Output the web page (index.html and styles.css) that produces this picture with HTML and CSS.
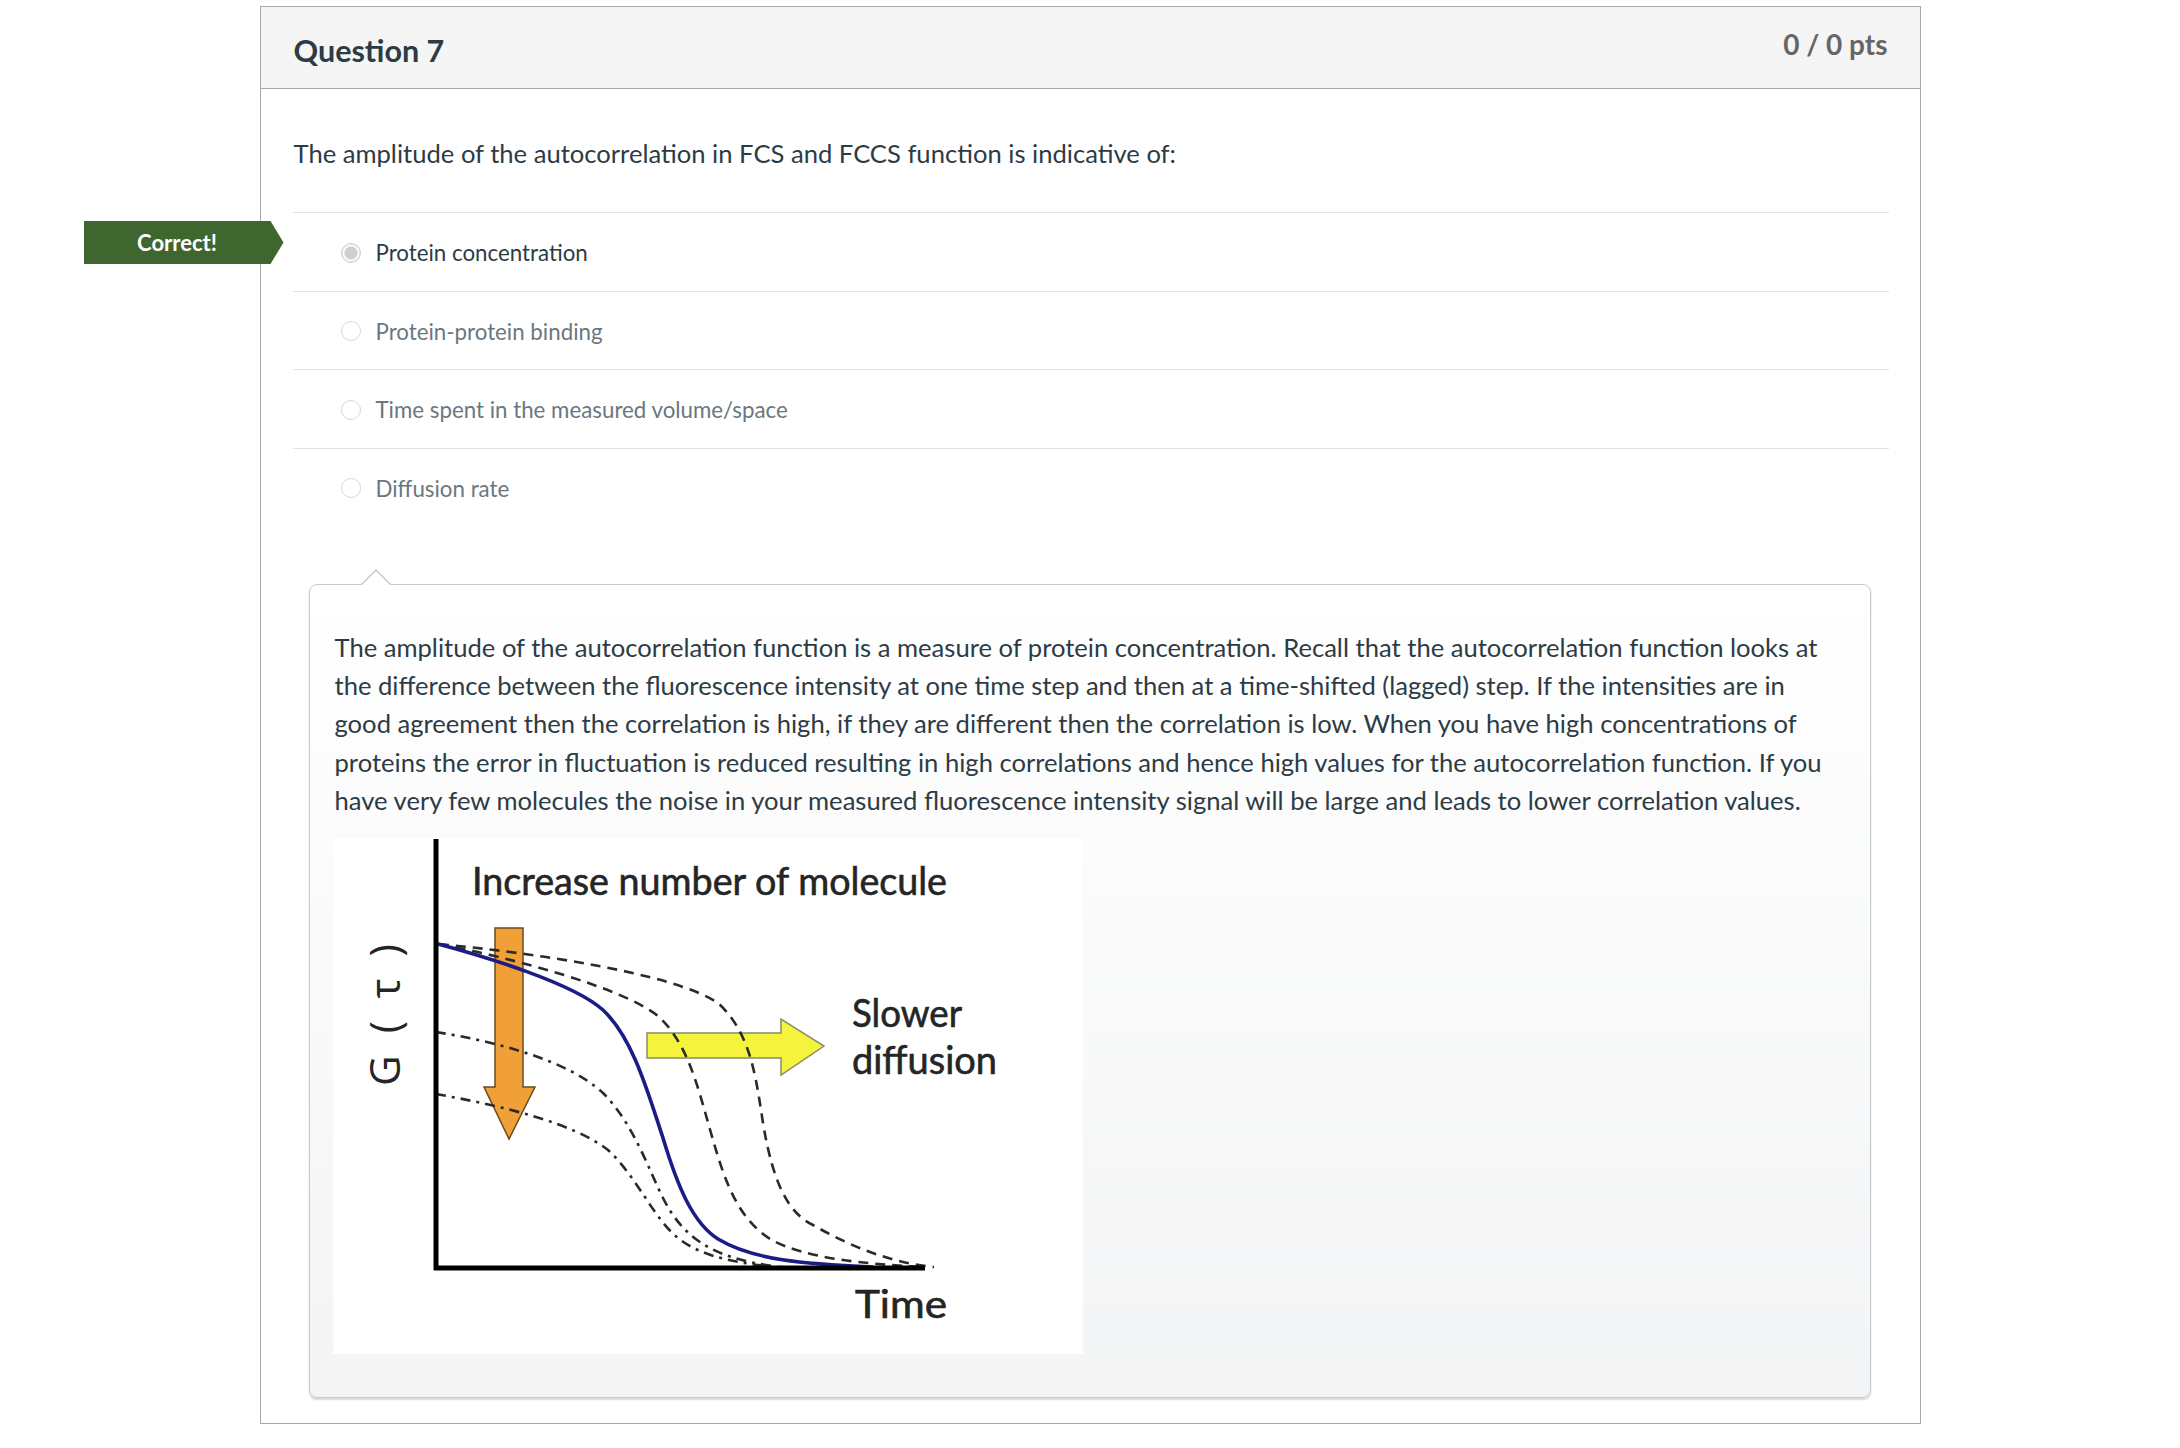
FILE: index.html
```html
<!DOCTYPE html>
<html lang="en">
<head>
<meta charset="utf-8">
<title>Question 7</title>
<link rel="stylesheet" href="styles.css">
</head>
<body>
<div class="card">
  <div class="badge">Correct!</div>
  <header class="q-head">
    <h2 class="q-title">Question 7</h2>
    <span class="pts">0 / 0 pts</span>
  </header>
  <div class="q-body">
    <p class="q-text">The amplitude of the autocorrelation in FCS and FCCS function is indicative of:</p>
    <ul class="answers">
      <li class="answer selected"><span class="radio"></span><span class="label">Protein concentration</span></li>
      <li class="answer"><span class="radio"></span><span class="label">Protein-protein binding</span></li>
      <li class="answer"><span class="radio"></span><span class="label">Time spent in the measured volume/space</span></li>
      <li class="answer"><span class="radio"></span><span class="label">Diffusion rate</span></li>
    </ul>
    <div class="feedback">
      <p class="fb-text">The amplitude of the autocorrelation function is a measure of protein concentration. Recall that the autocorrelation function looks at the difference between the fluorescence intensity at one time step and then at a time-shifted (lagged) step. If the intensities are in good agreement then the correlation is high, if they are different then the correlation is low. When you have high concentrations of proteins the error in fluctuation is reduced resulting in high correlations and hence high values for the autocorrelation function. If you have very few molecules the noise in your measured fluorescence intensity signal will be large and leads to lower correlation values.</p>
      <div class="figure">
        <svg width="750" height="516" viewBox="0 0 750 516" xmlns="http://www.w3.org/2000/svg">
          <rect width="750" height="516" fill="#ffffff"/>
          <!-- arrows -->
          <polygon points="162,90 190,90 190,249 202,249 176,301 151,249 162,249" fill="#f0a036" stroke="#6b4a1c" stroke-width="1.5"/>
          <polygon points="314,195 448,195 448,181 491,208 448,237 448,220 314,220" fill="#f4f43c" stroke="#8a8a6a" stroke-width="1.5"/>
          <!-- curves -->
          <g fill="none" stroke="#2a2a2a" stroke-width="2.6">
            <path d="M106,106 C180,120 290,150 325,178 C355,205 365,250 378,295 C392,345 405,380 437,401 C470,420 530,426 590,429" stroke-dasharray="10 7"/>
            <path d="M106,106 C200,115 340,135 385,165 C418,195 423,240 430,285 C440,345 455,375 480,387 C520,410 560,425 601,429" stroke-dasharray="10 7"/>
            <path d="M103,194 C160,203 235,222 270,255 C300,285 315,330 330,360 C350,400 380,420 440,428" stroke-dasharray="10 6 3 6"/>
            <path d="M103,256 C170,268 240,285 275,312 C305,340 320,380 345,400 C370,420 410,427 460,430" stroke-dasharray="10 6 3 6"/>
          </g>
          <path d="M105,106 C150,118 240,145 270,172 C300,200 315,255 330,300 C345,350 360,385 385,401 C420,422 470,426 540,429" fill="none" stroke="#1c1c86" stroke-width="3.6"/>
          <!-- axes -->
          <line x1="103" y1="1" x2="103" y2="432" stroke="#000" stroke-width="5"/>
          <line x1="101" y1="430" x2="592" y2="430" stroke="#000" stroke-width="5"/>
          <!-- labels -->
          <text class="fig-label" x="139" y="57" textLength="475" lengthAdjust="spacingAndGlyphs">Increase number of molecule</text>
          <text class="fig-label" x="519" y="189" textLength="110" lengthAdjust="spacingAndGlyphs">Slower</text>
          <text class="fig-label" x="519" y="236" textLength="145" lengthAdjust="spacingAndGlyphs">diffusion</text>
          <text class="fig-label" x="522" y="480" textLength="92" lengthAdjust="spacingAndGlyphs">Time</text>
          <text class="fig-axis" x="50" y="177" transform="rotate(-90 50 177)" textLength="142" lengthAdjust="spacing">G ( τ )</text>
        </svg>
      </div>
    </div>
  </div>
</div>
</body>
</html>
```

FILE: styles.css
```css
html, body {
  margin: 0;
  padding: 0;
  background: #ffffff;
}

body {
  font-family: Lato, "Open Sans", sans-serif;
  color: #2d3b45;
}

.card {
  position: relative;
  box-sizing: border-box;
  width: 1661px;
  margin: 6px auto 0;
  border: 1px solid #a9a9a9;
  background: #ffffff;
}

.badge {
  position: absolute;
  left: -177px;
  top: 214px;
  width: 200px;
  height: 43px;
  box-sizing: border-box;
  padding-right: 13px;
  background: #3f662f;
  color: #ffffff;
  font-weight: 700;
  font-size: 22px;
  line-height: 43px;
  text-align: center;
  clip-path: polygon(0 0, 187px 0, 100% 50%, 187px 100%, 0 100%);
  z-index: 2;
}

.q-head {
  display: flex;
  justify-content: space-between;
  align-items: flex-start;
  height: 81px;
  padding: 0 32px 0 33px;
  background: #f5f5f5;
  border-bottom: 1px solid #a9a9a9;
}

.q-title {
  margin: 25px 0 0;
  font-size: 30.5px;
  line-height: 1.2;
  font-weight: 700;
  color: #2d3b45;
}

.pts {
  margin-top: 21px;
  font-size: 28px;
  line-height: 1.2;
  font-weight: 700;
  color: #666666;
}

.q-body {
  padding: 0 31px 25px 32px;
}

.q-text {
  margin: 46px 0 41px 1px;
  font-size: 25.6px;
  line-height: 36px;
}

.answers {
  list-style: none;
  margin: 0;
  padding: 0;
}

.answer {
  display: flex;
  align-items: center;
  gap: 15px;
  box-sizing: border-box;
  height: 78.5px;
  padding: 2px 0 0 48px;
  border-top: 1px solid #e3e3e3;
  font-size: 22.3px;
  color: #6b7780;
}

.answer.selected {
  color: #2d3b45;
}

.answer .radio {
  flex: none;
  width: 20px;
  height: 20px;
  box-sizing: border-box;
  border-radius: 50%;
  border: 1px solid #d7d7d7;
  background: #ffffff;
}

.answer.selected .radio {
  border: 1px solid #cccccc;
  background: radial-gradient(circle, #cfcfcf 0 6px, #ffffff 7px);
  box-shadow: inset 0 0 0 1px #e6e6e6;
}

.feedback {
  position: relative;
  margin: 58px 18px 0 16px;
  padding: 43px 40px 43px 25px;
  border: 1px solid #c5cbd0;
  border-radius: 8px;
  background: linear-gradient(#ffffff, #f3f4f5);
  box-shadow: 0 2px 2px rgba(0, 0, 0, 0.16);
}

.feedback::before {
  content: "";
  position: absolute;
  left: 50px;
  top: -16px;
  width: 0;
  height: 0;
  border-left: 16px solid transparent;
  border-right: 16px solid transparent;
  border-bottom: 16px solid #c5cbd0;
}

.feedback::after {
  content: "";
  position: absolute;
  left: 51px;
  top: -14px;
  width: 0;
  height: 0;
  border-left: 15px solid transparent;
  border-right: 15px solid transparent;
  border-bottom: 15px solid #ffffff;
}

.fb-text {
  margin: 0 0 19px;
  font-size: 25.6px;
  line-height: 38.2px;
  color: #2d3b45;
}

.figure {
  width: 750px;
  height: 516px;
  margin-left: -2px;
}

.figure svg {
  display: block;
}

.fig-label {
  font-family: Lato, "Open Sans", sans-serif;
  font-size: 38px;
  fill: #252525;
  stroke: #252525;
  stroke-width: 0.6;
}

.fig-axis {
  font-family: "Open Sans", "DejaVu Sans", sans-serif;
  font-size: 42px;
  fill: #252525;
  text-anchor: middle;
  dominant-baseline: central;
}
```
